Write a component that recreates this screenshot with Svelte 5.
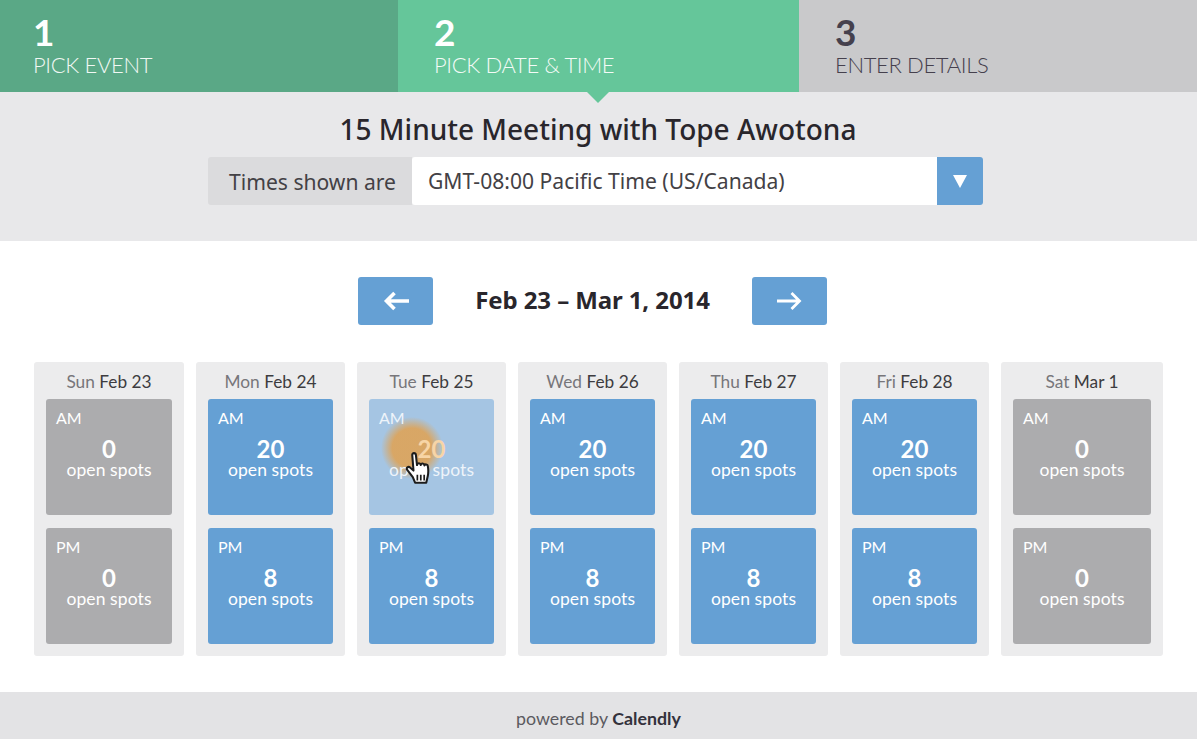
<script lang="ts">
	type Slot = { label: string; spots: number };
	type Day = { name: string; date: string; am: number; pm: number; hover?: boolean };

	const steps = [
		{ num: 1, label: 'PICK EVENT', cls: 'done' },
		{ num: 2, label: 'PICK DATE & TIME', cls: 'current' },
		{ num: 3, label: 'ENTER DETAILS', cls: 'todo' }
	];

	const days: Day[] = [
		{ name: 'Sun', date: 'Feb 23', am: 0, pm: 0 },
		{ name: 'Mon', date: 'Feb 24', am: 20, pm: 8 },
		{ name: 'Tue', date: 'Feb 25', am: 20, pm: 8, hover: true },
		{ name: 'Wed', date: 'Feb 26', am: 20, pm: 8 },
		{ name: 'Thu', date: 'Feb 27', am: 20, pm: 8 },
		{ name: 'Fri', date: 'Feb 28', am: 20, pm: 8 },
		{ name: 'Sat', date: 'Mar 1', am: 0, pm: 0 }
	];

	function slots(d: Day): Slot[] {
		return [
			{ label: 'AM', spots: d.am },
			{ label: 'PM', spots: d.pm }
		];
	}
</script>

<div class="page">
	<header class="steps">
		{#each steps as s}
			<div class="step {s.cls}">
				<div class="num">{s.num}</div>
				<div class="label">{s.label}</div>
			</div>
		{/each}
	</header>

	<section class="intro">
		<h1>15 Minute Meeting with Tope Awotona</h1>
		<div class="tz">
			<span class="tz-label">Times shown are</span>
			<span class="tz-value">GMT-08:00 Pacific Time (US/Canada)</span>
			<span class="tz-btn"><i></i></span>
		</div>
	</section>

	<main class="week">
		<div class="week-nav">
			<button class="nav" aria-label="Previous week">
				<svg width="30" height="22" viewBox="0 0 30 22">
					<path d="M28 11H5M13.500 3l-8 8 8 8" fill="none" stroke="#fff" stroke-width="3.600" />
				</svg>
			</button>
			<div class="range">Feb 23 – Mar 1, 2014</div>
			<button class="nav" aria-label="Next week">
				<svg width="30" height="22" viewBox="0 0 30 22">
					<path d="M2 11h23M16.500 3l8 8-8 8" fill="none" stroke="#fff" stroke-width="2.800" />
				</svg>
			</button>
		</div>

		<div class="days">
			{#each days as d}
				<div class="day">
					<div class="day-head"><span>{d.name}</span> {d.date}</div>
					{#each slots(d) as slot}
						<div
							class="slot"
							class:empty={slot.spots === 0}
							class:hover={d.hover && slot.label === 'AM'}
						>
							{#if d.hover && slot.label === 'AM'}
								<div class="glow"></div>
							{/if}
							<div class="ampm">{slot.label}</div>
							<div class="count">{slot.spots}</div>
							<div class="open">open spots</div>
							{#if d.hover && slot.label === 'AM'}
								<svg class="hand" width="27" height="33" viewBox="1 1 23 29">
									<path
										d="M7 3.500c0-2 3-2 3.200 0l1 9c.2-2 3-2.200 3.300 0 .2-1.800 3-1.800 3.200.3.400-1.400 2.900-1.200 3 .6.500 3 .6 6-.1 9l-1.300 5.600H9.500L7.500 23 2.600 16.800c-1.300-1.800.9-3.600 2.500-2.200l3 2.700z"
										fill="#fff"
										stroke="#1c1c1c"
										stroke-width="1.800"
										stroke-linejoin="round"
									/>
									<path d="M11.500 21v5M14.500 21v5M17.500 21v5" stroke="#1c1c1c" stroke-width="1.500" />
								</svg>
							{/if}
						</div>
					{/each}
				</div>
			{/each}
		</div>
	</main>

	<footer class="foot">powered by <strong>Calendly</strong></footer>
</div>

<style>
	:global(body) {
		margin: 0;
		background: #fff;
	}

	.page {
		width: 1197px;
		height: 739px;
		display: flex;
		flex-direction: column;
		overflow: hidden;
		font-family: 'Lato', 'Noto Sans', sans-serif;
		color: #2b2a2e;
	}

	.steps {
		display: grid;
		grid-template-columns: 398px 401px 398px;
		height: 92px;
	}

	.step {
		position: relative;
		padding: 11px 36px 0;
		box-sizing: border-box;
	}

	.step.done {
		padding-left: 33px;
		background: #5aa886;
		color: #f1f8f4;
	}

	.step.current {
		background: #65c69a;
		color: #f4fbf7;
	}

	.step.current::after {
		content: '';
		position: absolute;
		left: 189px;
		top: 92px;
		border-left: 11px solid transparent;
		border-right: 11px solid transparent;
		border-top: 11px solid #65c69a;
	}

	.step.todo {
		background: #c9c9cb;
		color: #45404d;
	}

	.num {
		font-size: 37px;
		line-height: 41px;
		font-weight: 700;
	}

	.step.done .num,
	.step.current .num {
		color: #fff;
	}

	.label {
		font-size: 22px;
		line-height: 26px;
		font-weight: 300;
		letter-spacing: -0.35px;
	}

	.intro {
		height: 149px;
		box-sizing: border-box;
		padding-top: 20px;
		background: #e8e8ea;
		display: flex;
		flex-direction: column;
		align-items: center;
	}

	h1 {
		margin: 0 0 11px;
		font-size: 28px;
		line-height: 34px;
		font-weight: 500;
		color: #29262c;
		font-family: 'Noto Sans', sans-serif;
		margin-right: 1px;
	}

	.tz {
		display: flex;
		width: 775px;
		height: 48px;
		margin-right: 6px;
		font-family: 'Noto Sans', sans-serif;
		font-size: 21.100px;
		line-height: 50px;
		color: #434145;
	}

	.tz-label {
		width: 204px;
		box-sizing: border-box;
		padding-left: 21px;
		background: #dbdbdd;
		border-radius: 3px 0 0 3px;
	}

	.tz-value {
		flex: 1;
		padding-left: 16px;
		background: #fff;
		border-radius: 3px 0 0 3px;
		line-height: 48px;
	}

	.tz-btn {
		width: 46px;
		display: flex;
		align-items: center;
		justify-content: center;
		background: #65a0d4;
		border-radius: 0 3px 3px 0;
	}

	.tz-btn i {
		border-left: 7px solid transparent;
		border-right: 7px solid transparent;
		border-top: 13px solid #fff;
	}

	.week {
		flex: 1;
		padding: 36px 34px 0;
		background: #fff;
	}

	.week-nav {
		display: flex;
		justify-content: center;
		align-items: center;
		height: 48px;
		padding-right: 12px;
	}

	.nav {
		width: 75px;
		height: 48px;
		padding: 0;
		border: 0;
		border-radius: 3px;
		background: #65a0d4;
		display: flex;
		align-items: center;
		justify-content: center;
	}

	.range {
		width: 319px;
		padding-bottom: 3px;
		text-align: center;
		font-size: 24px;
		font-weight: 700;
		color: #29262c;
		font-family: 'Noto Sans', sans-serif;
		letter-spacing: -0.1px;
	}

	.days {
		display: grid;
		grid-template-columns: 150px repeat(5, 149px) 162px;
		column-gap: 12px;
		margin-top: 37px;
	}

	.day {
		height: 294px;
		box-sizing: border-box;
		padding: 0 12px;
		background: #ececed;
		border-radius: 3px;
	}

	.day-head {
		height: 37px;
		line-height: 39px;
		text-align: center;
		font-size: 17.300px;
		color: #3d3c40;
	}

	.day-head span {
		color: #77767a;
	}

	.slot {
		position: relative;
		height: 116px;
		margin-bottom: 13px;
		box-sizing: border-box;
		padding: 9px 10px 0;
		background: #65a0d4;
		border-radius: 3px;
		color: #fff;
		text-align: center;
	}

	.slot.empty {
		background: #acacae;
	}

	.slot.hover {
		background: #a5c5e3;
		color: #eef4fa;
	}

	.ampm {
		position: relative;
		text-align: left;
		font-size: 16px;
		line-height: 20px;
	}

	.count {
		position: relative;
		margin-top: 9px;
		font-size: 24px;
		line-height: 24px;
		font-weight: 700;
	}

	.slot.hover .count {
		color: #f7d5a6;
	}

	.open {
		position: relative;
		font-size: 17.500px;
		line-height: 17px;
		letter-spacing: 0.100px;
	}

	.glow {
		position: absolute;
		left: 12px;
		top: 18px;
		width: 62px;
		height: 62px;
		border-radius: 50%;
		background: radial-gradient(circle, rgba(219, 165, 95, 0.95) 45%, rgba(219, 165, 95, 0) 71%);
	}

	.hand {
		position: absolute;
		left: 36px;
		top: 53px;
	}

	.foot {
		height: 47px;
		line-height: 53px;
		text-align: center;
		background: #e3e3e5;
		font-size: 17.800px;
		color: #5b5a60;
	}

	.foot strong {
		font-weight: 700;
		color: #33323c;
	}
</style>
